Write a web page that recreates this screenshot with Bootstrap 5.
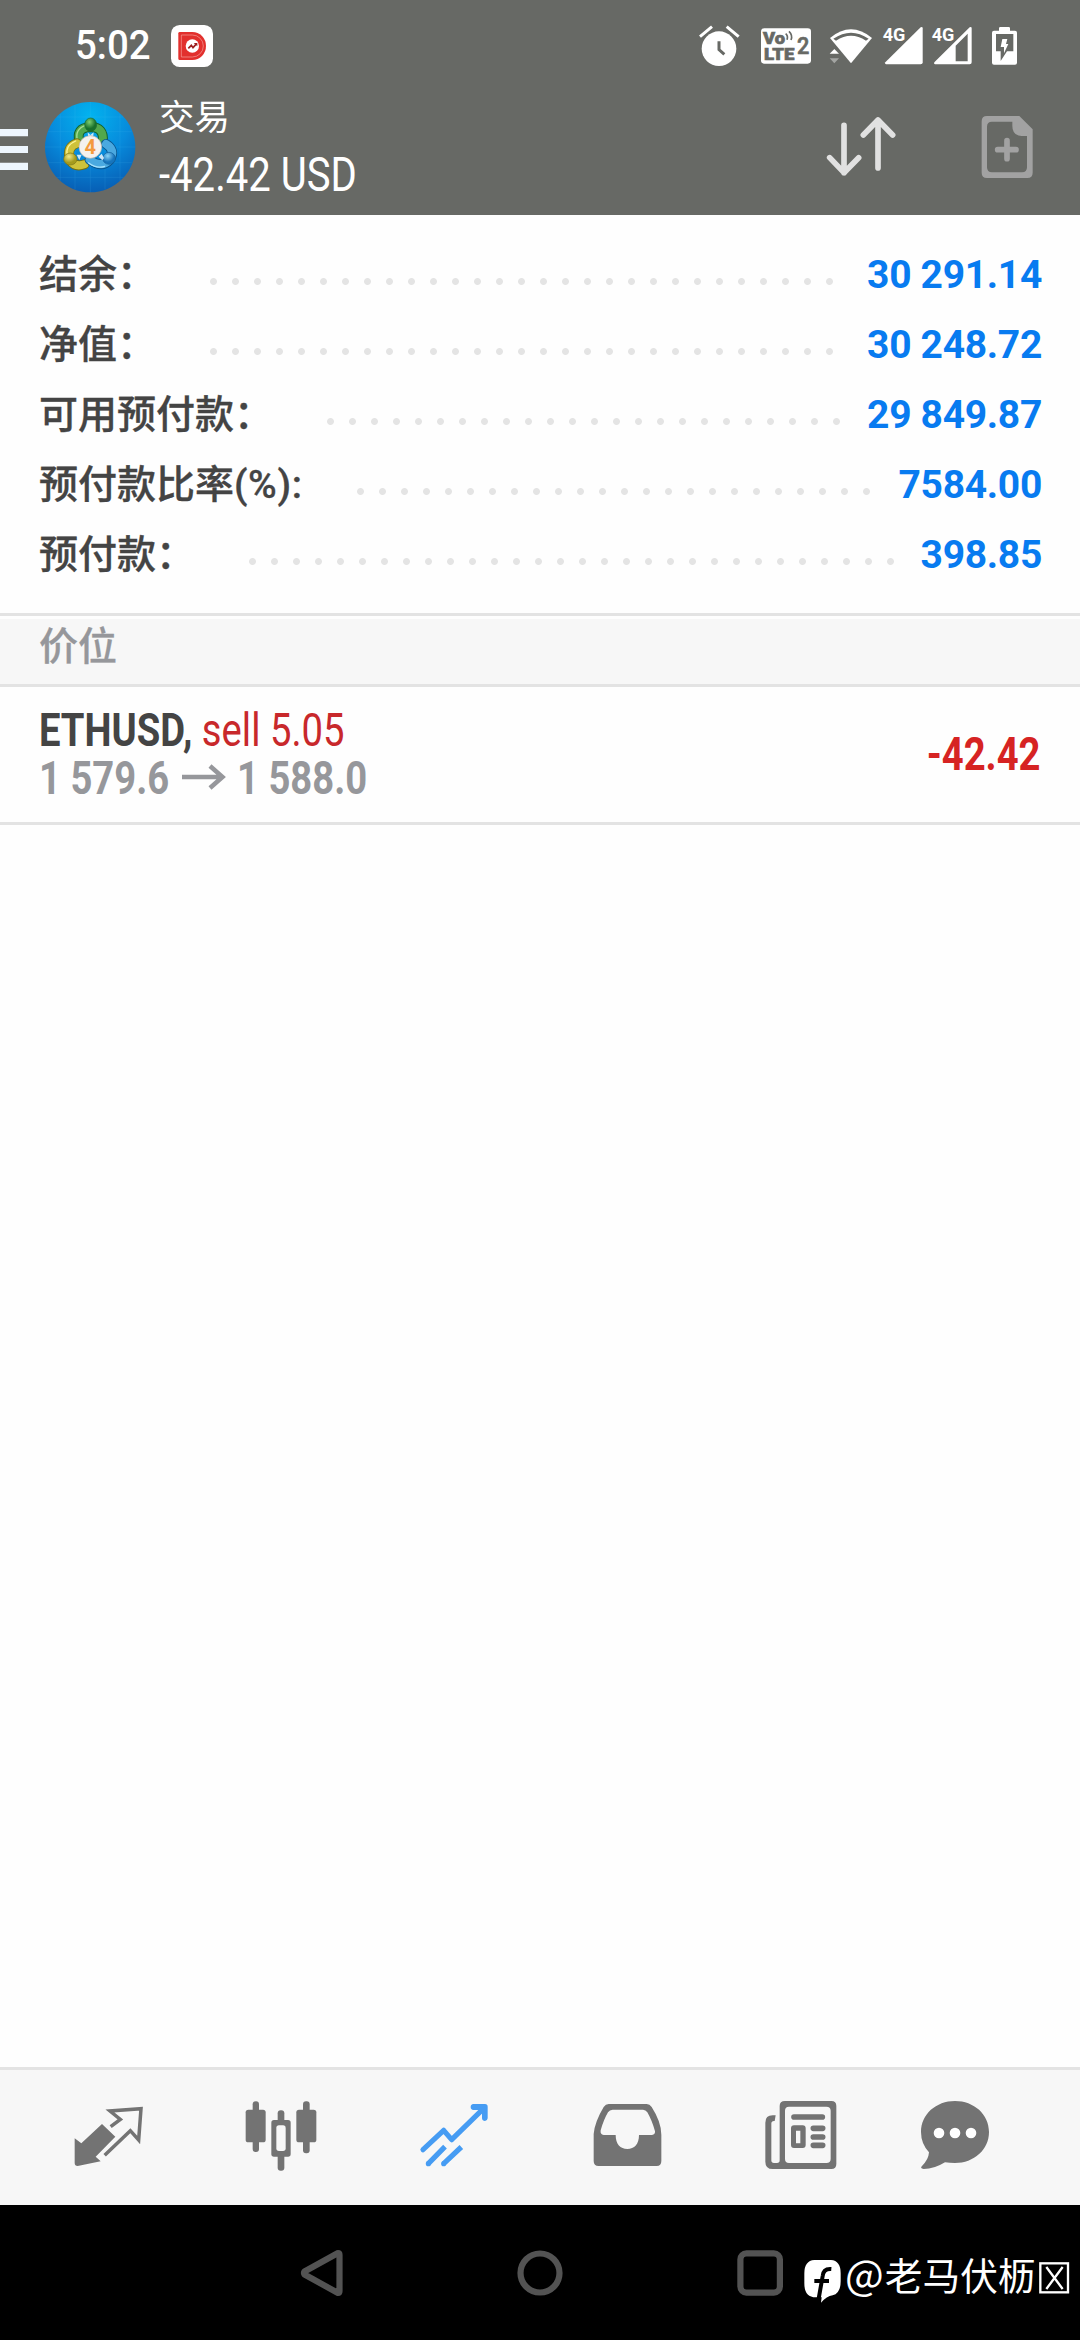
<!DOCTYPE html>
<html lang="zh-CN">
<head>
<meta charset="utf-8">
<meta name="viewport" content="width=device-width, initial-scale=1">
<title>交易</title>
<link href="https://cdn.jsdelivr.net/npm/bootstrap@5.3.0/dist/css/bootstrap.min.css" rel="stylesheet">
<style>
body{width:1080px;height:2340px;font-family:Roboto,"Noto Sans CJK SC",sans-serif;color:#444;background:#fefefe;overflow:hidden}
svg{display:block;flex:none}
.top-area{height:215px;background:#676965;color:#fff}
.status-line{height:92px}
.clock{font-size:40px;font-weight:500;line-height:92px;margin-left:75px;width:96px;transform:scaleX(.96);transform-origin:0 50%}
.title-bar{height:123px}
.title-texts{padding-left:23px}
.screen-name{font-size:35.5px;line-height:40px;margin-top:6px}
.squeeze{display:inline-block;transform-origin:0 50%;white-space:pre}
.profit-total{font-size:48px;line-height:56px;margin-top:9px;transform:scaleX(.835)}
.summary{height:398px;padding:25px 38px 0 39px}
.sum-row{height:70px;line-height:70px;font-size:39px;font-weight:500}
.sum-label{-webkit-text-stroke:.3px #444}
.ratio-sign{letter-spacing:.6px}
.dots{height:7px;margin:12px 24px 0 54px;background:radial-gradient(circle at 3.5px 3.5px,#e4e4e4 3px,transparent 3.9px) 0 0/22px 7px repeat-x}
.sum-val{color:#087bf0;font-weight:700;font-size:39px;letter-spacing:-.3px}
.section-head{height:74px;border-top:3px solid #e3e3e3;border-bottom:3px solid #e3e3e3;padding:3px 0 0}
.section-fill{background:#f7f7f7;height:65px;padding-left:39px;font-size:39px;line-height:56px;font-weight:500;color:#96979b;-webkit-text-stroke:.3px #96979b}
.deal{height:138px;border-bottom:3px solid #e3e3e3;padding:20px 39px 0 39px;font-size:45.5px;line-height:48px}
.deal-line{height:48px;width:500px}
.red-thin{color:#c8282b;font-weight:400}
.cond-bold{transform:scaleX(.84)}
.price-from{width:143px}
.prices{color:#96979b}
.deal-profit{color:#d62323;transform-origin:100% 50%;transform:scaleX(.84);margin-top:24px}
.tab-bar{height:138px;border-top:3px solid #e3e3e3;background:#f7f7f7;padding-left:22px}
.sys-nav{height:135px;background:#000}
.watermark{right:0;top:0;width:300px;height:135px;color:#fff;padding-left:23px}
.wm-name{font-family:"Noto Sans CJK SC",sans-serif;font-size:37.7px;line-height:56px;padding:2px 2px 0 2px}
.wm-at{font-size:41px;line-height:1;letter-spacing:1px}
</style>
<script src="https://cdn.jsdelivr.net/npm/bootstrap@5.3.0/dist/js/bootstrap.bundle.min.js"></script>
</head>
<body class="d-flex flex-column m-0">
<header class="top-area flex-shrink-0">
  <div class="status-line d-flex">
    <div class="clock">5:02</div>
    <svg width="42" height="92" viewBox="513 0 126 276"><rect x="513" y="75" width="126" height="126" rx="26" fill="#fff"/><path d="M535 100q0-4 4-4h38a41 42 0 0 1 0 84h-38q-4 0-4-4z" fill="#e2302d"/><path d="M544 105h33a33 33 0 0 1 0 66h-33z" fill="none" stroke="#f6a39d" stroke-width="2"/><circle cx="577" cy="138" r="20" fill="#fff"/><path d="M565 145l9-9 5 7 11-12" fill="none" stroke="#9b1f1f" stroke-width="5"/><path d="M581 129h11v10z" fill="#9b1f1f"/></svg>
    <svg class="ms-auto" width="400" height="92" viewBox="0 0 1200 276" fill="#fff">
      <circle cx="117" cy="146" r="52"/><path d="M60 110l36-30M140 80l36 30" stroke="#fff" stroke-width="9"/><path d="M117 124v25l16 14" fill="none" stroke="#676965" stroke-width="9"/>
      <rect x="243" y="85" width="150" height="106" rx="10"/>
      <g fill="#676965" stroke="#676965" stroke-width="2" font-family="Roboto" font-weight="900"><text x="249" y="132" font-size="52" textLength="66" lengthAdjust="spacingAndGlyphs">Vo</text><text x="252" y="179" font-size="50" textLength="91" lengthAdjust="spacingAndGlyphs">LTE</text><text x="351" y="163" font-size="70" font-weight="500" textLength="37" lengthAdjust="spacingAndGlyphs">2</text></g>
      <path d="M317 101q8 7 4 18M327 94q12 12 6 26" fill="none" stroke="#676965" stroke-width="5"/>
      <path d="M513 190L450 114Q513 62 576 114Z"/><path d="M460 116Q513 80 566 116L558 122Q513 93 468 122Z" fill="#676965"/>
      <path d="M463 147l14 14h-28z"/><path d="M463 190l14-15h-28z" opacity=".4"/>
      <path d="M616 187L722 82q6-3 6 3v102q0 6-6 6H618q-5-2-2-6z"/>
      <path fill-rule="evenodd" d="M763 187L869 82q6-3 6 3v102q0 6-6 6H765q-5-2-2-6zM827 137v47h36v-83z"/>
      <g font-family="Roboto" font-weight="700" font-size="54"><text x="608" y="123" textLength="68" lengthAdjust="spacingAndGlyphs">4G</text><text x="755" y="123" textLength="68" lengthAdjust="spacingAndGlyphs">4G</text></g>
      <path d="M957 92v-7q0-4 4-4h25q4 0 4 4v7h15q6 0 6 6v90q0 6-6 6h-63q-6 0-6-6V98q0-6 6-6z"/>
      <path d="M948 102h52v52h-19l-19 29v-29h-14z" fill="#676965"/><path d="M967 117h15l-4 15h7l-13 28v-19h-10z"/>
    </svg>
  </div>
  <div class="title-bar d-flex">
    <svg width="136" height="123" viewBox="0 276 408 369">
      <defs><radialGradient id="disc" cx=".5" cy=".15" r=".9"><stop offset="0" stop-color="#02b3ef"/><stop offset=".5" stop-color="#078bdc"/><stop offset="1" stop-color="#0759b0"/></radialGradient>
      <radialGradient id="gr" cx=".4" cy=".3"><stop offset="0" stop-color="#7fcf70"/><stop offset="1" stop-color="#19702b"/></radialGradient>
      <radialGradient id="ye" cx=".4" cy=".3"><stop offset="0" stop-color="#f2e887"/><stop offset="1" stop-color="#a59a1d"/></radialGradient>
      <radialGradient id="bl" cx=".4" cy=".3"><stop offset="0" stop-color="#88d3f7"/><stop offset="1" stop-color="#1675bd"/></radialGradient></defs>
      <path d="M0 387h84v22H0zM0 438h84v21H0zM0 488h84v22H0z" fill="#edf6fe"/>
      <circle cx="270.500" cy="441.500" r="135.500" fill="url(#disc)"/>
      <path d="M181 342v200M225 315v253M271 306v271M315 315v253M360 342v200M145 395h250M135 441h271M145 488h250M170 532h200M170 351h200" stroke="#57c4f5" stroke-width="1.500" opacity=".25"/>
      <g fill="none" stroke-linecap="round"><path d="M239 426Q226 384 270 381q44 0 38 44" stroke="#14622d" stroke-width="30"/><path d="M239 426Q226 384 270 381q44 0 38 44" stroke="#51a84c" stroke-width="24"/><path d="M232 420Q224 388 256 376" stroke="#a7dd94" stroke-width="4"/>
      <path d="M231 430Q198 440 210 481q16 22 43 12" stroke="#746f12" stroke-width="30"/><path d="M231 430Q198 440 210 481q16 22 43 12" stroke="#cfc23a" stroke-width="24"/><path d="M227 423Q195 436 202 466" stroke="#fff396" stroke-width="4"/>
      <path d="M318 432Q347 450 330 479q-24 27-61 0" stroke="#07558e" stroke-width="30"/><path d="M318 432Q347 450 330 479q-24 27-61 0" stroke="#4aa9e0" stroke-width="24"/><path d="M266 489Q290 507 314 499" stroke="#a8e2fc" stroke-width="4"/></g>
      <ellipse cx="272" cy="374" rx="18" ry="20" fill="url(#gr)" stroke="#1b6b31" stroke-width="2"/><ellipse cx="211" cy="477" rx="20" ry="18" fill="url(#ye)" stroke="#7d7616" stroke-width="2"/><ellipse cx="327" cy="475" rx="19" ry="18" fill="url(#bl)" stroke="#125f9c" stroke-width="2"/>
      <path d="M263 397l8 8 10-8-2 18h-14zM230 464l15 0-7 16zM296 470l9-9 7 13-5 7z" fill="#fff" opacity=".8"/>
      <circle cx="271" cy="441" r="34" fill="#f4f1ee" stroke="#b6b5ad" stroke-width="2"/><text x="271" y="462" text-anchor="middle" font-family="Roboto" font-weight="700" font-size="60" fill="#f39a3d">4</text>
    </svg>
    <div class="title-texts d-flex flex-column"><div class="screen-name">交易</div><div class="squeeze profit-total">-42.42 USD</div></div>
    <svg class="ms-auto" width="400" height="123" viewBox="0 276 1200 369" fill="none">
      <path d="M492 376v142M449 473l43 45 44-45M594 504V360M550 405l44-45 44 45" stroke="#e1e1e1" stroke-width="17" stroke-linecap="round" stroke-linejoin="round"/>
      <path fill="#a2a2a2" fill-rule="evenodd" d="M921 348h97l40 40v130q0 16-16 16H921q-16 0-16-16V364q0-16 16-16zM936 365q-15 0-15 15v122q0 15 15 15h90q15 0 15-15v-94h-16q-28-2-28-30v-13z"/><path d="M981 422v54M953 449h55" stroke="#a2a2a2" stroke-width="17" stroke-linecap="round"/>
    </svg>
  </div>
</header>
<main class="flex-grow-1">
  <section class="summary">
    <div class="sum-row d-flex align-items-center"><span class="sum-label">结余：</span><span class="dots flex-grow-1"></span><span class="sum-val">30 291.14</span></div>
    <div class="sum-row d-flex align-items-center"><span class="sum-label">净值：</span><span class="dots flex-grow-1"></span><span class="sum-val">30 248.72</span></div>
    <div class="sum-row d-flex align-items-center"><span class="sum-label">可用预付款：</span><span class="dots flex-grow-1"></span><span class="sum-val">29 849.87</span></div>
    <div class="sum-row d-flex align-items-center"><span class="sum-label">预付款比率<span class="ratio-sign">(%):</span></span><span class="dots flex-grow-1"></span><span class="sum-val">7584.00</span></div>
    <div class="sum-row d-flex align-items-center"><span class="sum-label">预付款：</span><span class="dots flex-grow-1"></span><span class="sum-val">398.85</span></div>
  </section>
  <div class="section-head"><div class="section-fill">价位</div></div>
  <div class="deal d-flex justify-content-between align-items-start fw-bold">
    <div>
      <div class="deal-line squeeze cond-bold">ETHUSD, <span class="red-thin">sell 5.05</span></div>
      <div class="prices d-flex"><span class="squeeze cond-bold price-from">1 579.6</span>
        <svg width="55" height="48" viewBox="0 0 55 48" fill="none" stroke="#96979b" stroke-width="4.500"><path d="M0 22h41M28 11l12.500 11L28 33"/></svg>
        <span class="squeeze cond-bold">1 588.0</span></div>
    </div>
    <div class="squeeze deal-profit">-42.42</div>
  </div>
</main>
<nav class="tab-bar d-flex flex-shrink-0">
  <svg width="173" height="135" viewBox="-84 60 519 405"><path d="M156 222l40 38-59 60 15 14-69 14q-9 0-9-9v-74l20 15z" fill="#737373"/><path d="M182 230l29-22-31-25 93-7-7 94-25-28-77 74" fill="none" stroke="#737373" stroke-width="10.500"/></svg>
  <svg width="173" height="135" viewBox="435 60 519 405"><g fill="#737373"><rect x="608" y="154" width="19" height="152" rx="9"/><rect x="587" y="179" width="60" height="98" rx="8"/><rect x="759" y="154" width="20" height="156" rx="9"/><rect x="739" y="179" width="60" height="98" rx="8"/><rect x="683" y="181" width="20" height="181" rx="9"/><rect x="664" y="210" width="58" height="110" rx="8"/></g><rect x="679" y="226" width="28" height="77" rx="8" fill="#f7f7f7"/></svg>
  <svg width="173" height="135" viewBox="954 60 519 405"><g fill="none" stroke="#469cf3" stroke-width="15.500" stroke-linejoin="round"><path d="M1119 299l62-58 24 28 93-91" stroke-linecap="round"/><path d="M1135 341l50-51M1181 341l53-50"/></g><circle cx="1135" cy="341" r="7.700" fill="#469cf3"/><circle cx="1181" cy="341" r="7.700" fill="#469cf3"/><path d="M1270 162h35q8 0 8 8v35q-1 8-8 8-8 0-9-8v-25h-26q-8-1-8-9t8-9z" fill="#469cf3"/></svg>
  <svg width="173" height="135" viewBox="-57 60 519 405"><path fill="#737373" fill-rule="evenodd" d="M146 162h114q9 0 15 9 29 45 29 83v79q0 15-14 15H116q-15 0-15-15v-81q3-36 30-81 6-9 15-9zM158 179q-9 0-14 8-13 22-22 54-2 13 9 14h36c0 27 14 42 35 42s35-15 35-42h39q10-1 9-11-9-33-23-57-5-8-13-8z"/></svg>
  <svg width="173" height="135" viewBox="462 60 519 405"><path fill="#737373" fill-rule="evenodd" d="M675 153h139q15 0 15 15v174q0 15-15 15H638q-22 0-22-22V218q0-22 22-22h9l-3 17h-2q-8 0-8 8v110q0 8 8 8h9q8 0 8-8V168q0-15 16-15zM687 170q-12 0-12 12v145q0 12 12 12h112q13 0 13-12V182q0-12-13-12z"/><path d="M702 201h85M760 235h28M760 261h28M760 286h28" stroke="#737373" stroke-width="17" stroke-linecap="round"/><path fill="#737373" fill-rule="evenodd" d="M702 226h26q9 0 9 9v50q0 9-9 9h-26q-9 0-9-9v-50q0-9 9-9zM708 242v38h13v-38z"/></svg>
  <svg width="173" height="135" viewBox="981 60 519 405"><path d="M1185 153c57 0 102 40 102 93s-45 93-102 93q-16 0-30-2-32 20-64 20-12-2-5-9 20-20 21-41-24-26-24-61c0-53 45-93 102-93z" fill="#737373"/><g fill="#fff"><circle cx="1137" cy="249" r="16"/><circle cx="1185" cy="249" r="16"/><circle cx="1233" cy="249" r="16"/></g></svg>
</nav>
<footer class="sys-nav position-relative flex-shrink-0">
  <svg width="1080" height="135" viewBox="0 2205 1080 135" fill="none" stroke="#535353" stroke-width="6.200" stroke-linejoin="round"><path d="M304.500 2271.500q-1 1.500 0 3L338 2293q1.500 0 1.500-2v-36q0-2-1.500-2z"/><circle cx="540" cy="2273" r="19.500"/><rect x="740.400" y="2253.400" width="39.500" height="39.200" rx="6"/></svg>
  <div class="watermark position-absolute d-flex align-items-center">
    <svg width="40" height="135" viewBox="70 -45 120 405"><path d="M104 120h50q29 2 29 40v24q0 36-24 42-18 3-35 22l2-16h-18q-34 0-34-42v-30q0-38 30-40z" fill="#fff"/><path d="M104 183h44M155 147q-24-2-26 21l-12 68" fill="none" stroke="#000" stroke-width="12"/></svg>
    <div class="wm-name"><span class="wm-at">@</span>老马伏枥</div>
    <svg width="34" height="135" viewBox="775 -45 102 405" fill="none" stroke="#fff" stroke-width="7"><rect x="782" y="130" width="83" height="87"/><path d="M800 141l49 66M849 141l-49 66"/></svg>
  </div>
</footer>
</body>
</html>
